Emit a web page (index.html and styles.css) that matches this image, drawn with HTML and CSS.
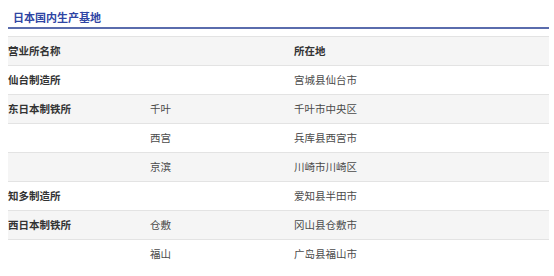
FILE: index.html
```html
<!DOCTYPE html>
<html lang="zh-CN">
<head>
<meta charset="utf-8">
<link rel="stylesheet" href="styles.css">
</head>
<body>
<div class="page">
  <h2 class="title">日本国内生产基地</h2>
  <table class="sites">
    <colgroup>
      <col class="c1"><col class="c2"><col class="c3">
    </colgroup>
    <thead>
      <tr><th>营业所名称</th><th></th><th>所在地</th></tr>
    </thead>
    <tbody>
      <tr><td class="name">仙台制造所</td><td></td><td>宫城县仙台市</td></tr>
      <tr><td class="name">东日本制铁所</td><td>千叶</td><td>千叶市中央区</td></tr>
      <tr><td class="name"></td><td>西宫</td><td>兵库县西宫市</td></tr>
      <tr><td class="name"></td><td>京滨</td><td>川崎市川崎区</td></tr>
      <tr><td class="name">知多制造所</td><td></td><td>爱知县半田市</td></tr>
      <tr><td class="name">西日本制铁所</td><td>仓敷</td><td>冈山县仓敷市</td></tr>
      <tr><td class="name"></td><td>福山</td><td>广岛县福山市</td></tr>
    </tbody>
  </table>
</div>
</body>
</html>
```
FILE: styles.css
```css
html, body {
  margin: 0;
  padding: 0;
  background: #fff;
}
.page {
  width: 541px;
  padding-left: 8px;
  font-family: "Noto Sans CJK SC", "Noto Sans", sans-serif;
}
.title {
  margin: 0 0 7px 0;
  padding: 10px 0 3px 5px;
  font-size: 11px;
  line-height: 14px;
  font-weight: bold;
  color: #2f45a4;
  border-bottom: 2px solid #5a6cad;
}
.sites {
  width: 100%;
  border-collapse: collapse;
  font-size: 10.5px;
}
.sites col.c1 { width: 142px; }
.sites col.c2 { width: 144px; }
.sites th, .sites td {
  text-align: left;
  padding: 6px 0 6px 0;
  line-height: 16px;
  border-bottom: 1px solid #e3e3e3;
  color: #4a4a4a;
  font-weight: normal;
}
.sites th {
  font-weight: bold;
  color: #333;
  border-top: 1px solid #e3e3e3;
}
.sites td.name {
  font-weight: bold;
  color: #333;
}
.sites thead tr { background: #f5f5f5; }
.sites tbody tr:nth-child(even) { background: #f5f5f5; }
.sites tbody tr:last-child td { border-bottom: none; }
```
